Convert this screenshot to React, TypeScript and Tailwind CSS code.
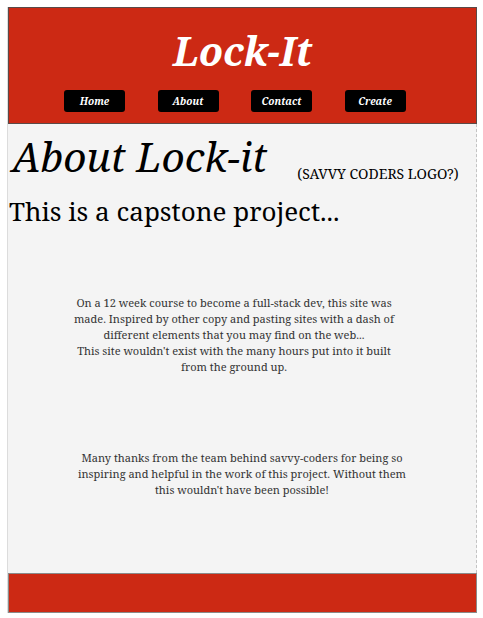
const serif = "font-['Noto_Serif','Droid_Serif','DejaVu_Serif',serif]";

const links = ['Home', 'About', 'Contact', 'Create'];

export default function App() {
  return (
    <div className={`min-h-screen bg-white pt-[7px] pl-[7px] ${serif}`}>
      <div className="w-[470px] h-[606px] flex flex-col border-l border-[#dcdcdc] bg-[#f4f4f4]">
        <header className="h-[117px] bg-[#cc2914] border border-[#5a4a48] flex flex-col">
          <h1 className="mt-[21px] text-center text-[39.5px] leading-[44px] font-bold italic text-white">Lock-It</h1>
          <nav className="mt-[17px] pl-[55px] flex gap-[32.5px]">
            {links.map((l) => (
              <a
                key={l}
                href="#"
                className="w-[61px] h-[22px] rounded-[3px] bg-black text-white text-[10px] font-bold italic flex items-center justify-center"
              >
                {l}
              </a>
            ))}
          </nav>
        </header>

        <main className="flex-1 border-r border-dashed border-[#c4c4c4] text-black">
          <div className="flex items-end pl-[4px] pt-[9px]">
            <h2 className="text-[40.5px] leading-[48px] italic">About Lock-it</h2>
            <span className="ml-[30px] mb-[-3px] text-[14px]">(SAVVY CODERS LOGO?)</span>
          </div>
          <h3 className="pl-[1px] mt-[14px] text-[26px] leading-[32px]">This is a capstone project...</h3>

          <p className="ml-[56px] mt-[68px] w-[340px] text-center text-[11px] leading-[16px] text-[#333]">
            On a 12 week course to become a full-stack dev, this site was made. Inspired by other copy and pasting sites with a dash of different elements that you may find on the web...
            <br />
            This site wouldn't exist with the many hours put into it built from the ground up.
          </p>

          <p className="mx-auto mt-[75px] w-[340px] text-center text-[11px] leading-[16px] text-[#333]">
            Many thanks from the team behind savvy-coders for being so inspiring and helpful in the work of this project. Without them this wouldn't have been possible!
          </p>
        </main>

        <footer className="h-[40px] bg-[#cc2914] border border-[#8a8a8a]" />
      </div>
    </div>
  );
}
